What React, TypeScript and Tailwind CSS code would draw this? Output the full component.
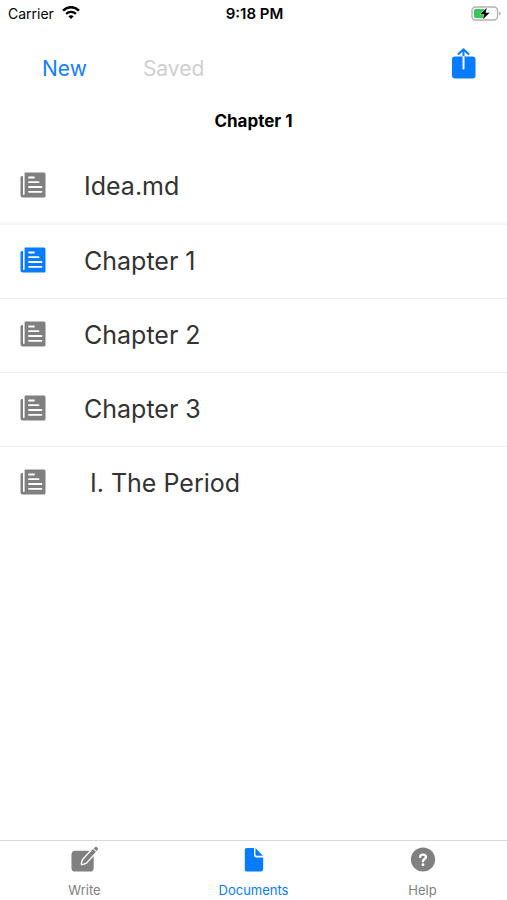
import { clsx } from "clsx";
import type { ReactNode } from "react";

type DocumentItem = {
  name: string;
  active?: boolean;
  nested?: boolean;
};

const documents: DocumentItem[] = [
  { name: "Idea.md" },
  { name: "Chapter 1", active: true },
  { name: "Chapter 2" },
  { name: "Chapter 3" },
  { name: "I. The Period", nested: true },
];

const StatusBar = () => {
  return (
    <div className="grid h-7 grid-cols-[1fr_auto_1fr] items-center pr-1.5 pl-2 text-black">
      <div className="flex items-center gap-2 pb-0.5">
        <span className="text-[14px]">Carrier</span>
        <svg viewBox="0 0 18 14" className="h-3.5 w-4.5" fill="none" stroke="currentColor" aria-hidden="true">
          <path d="M1 4.6C5.6 .1 12.4 .1 17 4.6" strokeWidth="2.6" />
          <path d="M4.1 7.9c2.8-2.6 7-2.6 9.8 0" strokeWidth="2.3" />
          <path d="M6.3 10.3C7.9 8.9 10.1 8.9 11.7 10.3L9 13z" fill="currentColor" stroke="none" />
        </svg>
      </div>
      <span className="text-center text-[15px] font-semibold">9:18 PM</span>
      <svg viewBox="0 0 30 16" className="h-4 w-7.5 justify-self-end" aria-hidden="true">
        <rect x="1" y="1" width="25.5" height="13" rx="3.5" fill="white" stroke="#b3b3b3" strokeWidth="1.4" />
        <path d="M4.5 3H13v9H4.5A1.5 1.5 0 0 1 3 10.5v-6A1.5 1.5 0 0 1 4.5 3z" fill="#35c759" />
        <path d="M28 5.5v4c1.1-.4 1.7-1.1 1.7-2s-.6-1.6-1.7-2z" fill="#b3b3b3" />
        <path
          d="M15.8 1.7L9.3 8.3h4L12 13.3l6.6-6.6h-4z"
          fill="black"
          stroke="white"
          strokeWidth=".8"
          paintOrder="stroke"
        />
      </svg>
    </div>
  );
};

const Toolbar = () => {
  return (
    <div className="flex h-20 items-center pr-7.5 pl-10.5 text-[21px]">
      <button type="button" className="pt-0.5 text-[#147efb]">
        New
      </button>
      <span className="ml-14 pt-0.5 text-[#cfcfcf]">Saved</span>
      <button type="button" aria-label="Share" className="mb-2 ml-auto text-[#087cff]">
        <svg viewBox="0 0 26 32" className="h-8 w-6.5" fill="none" strokeLinecap="round" strokeLinejoin="round">
          <rect x="1" y="8.5" width="23.5" height="22" rx="3" fill="currentColor" />
          <path d="M12.5 9V1.5M7.5 6l5-4.7 5 4.7" stroke="currentColor" strokeWidth="2" />
          <path d="M12.5 9V20.5" stroke="white" strokeWidth="2" />
        </svg>
      </button>
    </div>
  );
};

const NewspaperIcon = () => {
  return (
    <svg viewBox="0 0 26 26" className="size-6.5" aria-hidden="true">
      <path
        d="M3.5 4V2A1.5 1.5 0 0 1 5 .5h19a1.5 1.5 0 0 1 1.5 1.5v22a1.5 1.5 0 0 1-1.5 1.5H3A2.5 2.5 0 0 1 .5 23V5.500A1.5 1.5 0 0 1 2 4z"
        fill="currentColor"
      />
      <path d="M3 0h1.6v22.3a.8.8 0 0 1-1.6 0z" fill="white" />
      <path
        d="M9 5.5h5M9 10.2h9.5M9 15h12.500M9 19.8h12.5"
        stroke="white"
        strokeWidth="1.8"
        strokeLinecap="round"
      />
    </svg>
  );
};

const DocumentRow = ({ name, active, nested }: DocumentItem) => {
  return (
    <li className="h-[74px] border-[#ececec] first:border-b-[3px] first:border-[#f6f6f6] not-first:not-last:border-b">
      <button type="button" className="flex h-full w-full items-center gap-[38px] px-5 text-left">
        <span className={clsx("pb-1", active ? "text-[#087cff]" : "text-[#808080]")}>
          <NewspaperIcon />
        </span>
        <span className={clsx("text-[25px] text-[#333]", nested && "pl-1.5")}>{name}</span>
      </button>
    </li>
  );
};

type TabProps = {
  label: string;
  active?: boolean;
  children: ReactNode;
};

const Tab = ({ label, active, children }: TabProps) => {
  return (
    <a
      href="#"
      className={clsx("flex flex-1 flex-col items-center gap-1.5 pt-1", active ? "text-[#087cff]" : "text-[#808080]")}
    >
      {children}
      <span className="text-[13px] leading-5">{label}</span>
    </a>
  );
};

const App = () => {
  return (
    <div className="flex min-h-screen flex-col bg-white font-[Inter,Roboto,sans-serif]">
      <header>
        <StatusBar />
        <Toolbar />
        <h1 className="pb-[17px] text-center text-[17px] leading-[26px] font-bold text-black">Chapter 1</h1>
      </header>
      <main className="flex-1">
        <ul>
          {documents.map((item) => (
            <DocumentRow key={item.name} {...item} />
          ))}
        </ul>
      </main>
      <nav className="flex h-[60px] border-t border-[#d8d8d8]">
        <Tab label="Write">
          <svg viewBox="0 0 30 30" className="size-7.5" aria-hidden="true">
            <rect x="1" y="6" width="23" height="21.5" rx="4" fill="currentColor" />
            <path
              d="M13 15.500L23.300 4.200 26.300 7 16 18.300 11.800 19.600z"
              fill="currentColor"
              stroke="white"
              strokeWidth="2.8"
              strokeLinejoin="round"
              paintOrder="stroke"
            />
            <path d="M24 3.500L25.300 2.200a1.500 1.500 0 0 1 2.100 0l.7.7a1.500 1.500 0 0 1 0 2.100L27 6.300z" fill="currentColor" />
          </svg>
        </Tab>
        <Tab label="Documents" active>
          <svg viewBox="0 0 30 30" className="size-7.5" fill="currentColor" aria-hidden="true">
            <path d="M7.500 3H15v7.400A2.600 2.600 0 0 0 17.600 13H24.500v12a2.500 2.500 0 0 1-2.500 2.500H7.500A2 2 0 0 1 5.500 25.500V5A2 2 0 0 1 7.500 3z" />
            <path d="M16.500 3.200L24.200 11H17.600A1.100 1.100 0 0 1 16.500 9.900z" />
          </svg>
        </Tab>
        <Tab label="Help">
          <svg viewBox="0 0 30 30" className="size-7.5" fill="none" aria-hidden="true">
            <circle cx="15" cy="15" r="12.5" fill="currentColor" />
            <path
              d="M12 12.3C12.2 10.5 13.4 9.9 15 9.9c1.9 0 3.1 1 3.1 2.5 0 2.2-3.1 2.1-3.1 4.500"
              stroke="white"
              strokeWidth="2.4"
              strokeLinecap="round"
            />
            <circle cx="15" cy="20.5" r="1.5" fill="white" />
          </svg>
        </Tab>
      </nav>
    </div>
  );
};

export default App;
